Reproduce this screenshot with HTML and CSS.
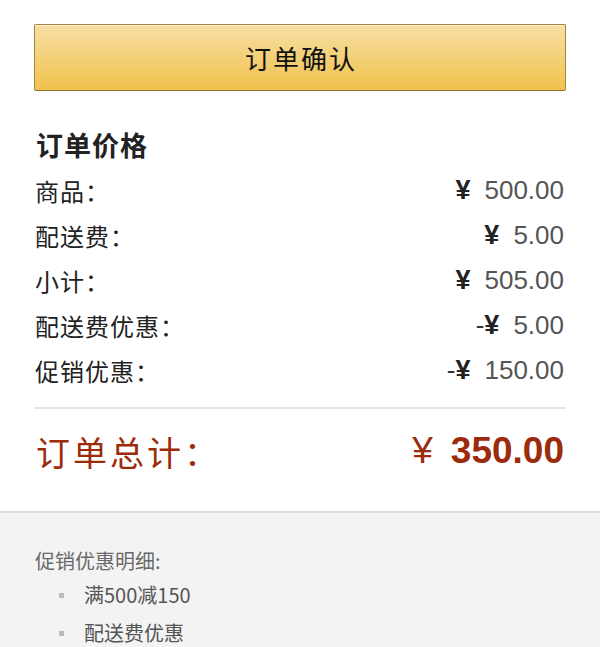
FILE: index.html
```html
<!DOCTYPE html>
<html lang="zh-CN">
<head>
<meta charset="utf-8">
<title>订单确认</title>
<link rel="stylesheet" href="styles.css">
</head>
<body>
<div class="main">
  <button class="confirm-btn">订单确认</button>
  <h2 class="price-title">订单价格</h2>
  <ul class="price-list">
    <li class="price-row"><span class="label">商品：</span><span class="amount"><span class="yen">¥</span>500.00</span></li>
    <li class="price-row"><span class="label">配送费：</span><span class="amount"><span class="yen">¥</span>5.00</span></li>
    <li class="price-row"><span class="label">小计：</span><span class="amount"><span class="yen">¥</span>505.00</span></li>
    <li class="price-row"><span class="label">配送费优惠：</span><span class="amount"><span class="minus">-</span><span class="yen">¥</span>5.00</span></li>
    <li class="price-row"><span class="label">促销优惠：</span><span class="amount"><span class="minus">-</span><span class="yen">¥</span>150.00</span></li>
  </ul>
  <div class="total-row">
    <span class="total-label">订单总计：</span>
    <span class="total-amount"><span class="total-yen">¥</span>350.00</span>
  </div>
</div>
<div class="promo">
  <div class="promo-title">促销优惠明细:</div>
  <ul class="promo-list">
    <li>满500减150</li>
    <li>配送费优惠</li>
  </ul>
</div>
</body>
</html>
```
FILE: styles.css
```css
html, body {
  margin: 0;
  padding: 0;
  background: #fff;
  font-family: "Noto Sans CJK SC", "Liberation Sans", sans-serif;
  color: #222;
}
.main {
  padding: 24px 34px 35px 34px;
}
.confirm-btn {
  display: block;
  width: 100%;
  height: 67px;
  margin: 0;
  padding: 0 0 0 2px;
  border: 1px solid #a88734;
  border-bottom-color: #8e7330;
  border-radius: 2px;
  background: linear-gradient(to bottom, #f7dfa5, #f0c14b);
  box-shadow: 0 1px 0 rgba(255,255,255,0.6) inset;
  font-family: "Noto Sans CJK SC", sans-serif;
  font-size: 26px;
  color: #111;
  letter-spacing: 2px;
}
.price-title {
  margin: 36px 0 0 2px;
  font-size: 27px;
  line-height: 36px;
  font-weight: bold;
  letter-spacing: 1px;
  color: #222;
}
.price-list {
  list-style: none;
  margin: 5px 0 0 0;
  padding: 0;
}
.price-row {
  display: flex;
  justify-content: space-between;
  align-items: center;
  height: 45px;
  padding: 0 2px 0 1px;
}
.label {
  font-size: 24px;
  letter-spacing: 1px;
  color: #222;
}
.amount {
  font-family: "Liberation Sans", sans-serif;
  font-size: 26px;
  color: #555;
}
.minus {
  color: #333;
}
.yen {
  color: #222;
  font-size: 27px;
  font-weight: bold;
  margin-right: 14px;
}
.total-row {
  display: flex;
  justify-content: space-between;
  align-items: center;
  height: 50px;
  margin-top: 14px;
  padding: 17px 2px 0 2px;
  border-top: 2px solid #e7e7e7;
}
.total-label {
  font-size: 34px;
  letter-spacing: 3px;
  color: #9c2b0c;
}
.total-amount {
  font-family: "Liberation Sans", sans-serif;
  font-size: 37px;
  font-weight: bold;
  color: #9c2b0c;
}
.total-yen {
  font-weight: normal;
  margin-right: 18px;
}
.promo {
  border-top: 2px solid #dedede;
  background: #f3f3f3;
  padding: 33px 34px 0 35px;
}
.promo-title {
  font-size: 20px;
  line-height: 30px;
  color: #6a6a6a;
}
.promo-list {
  list-style: none;
  margin: 0;
  padding: 0 0 0 24px;
}
.promo-list li {
  position: relative;
  padding-left: 25px;
  font-size: 20px;
  line-height: 38px;
  color: #555;
}
.promo-list li::before {
  content: "";
  position: absolute;
  left: 0;
  top: 17px;
  width: 5px;
  height: 5px;
  background: #bbb;
}
```
